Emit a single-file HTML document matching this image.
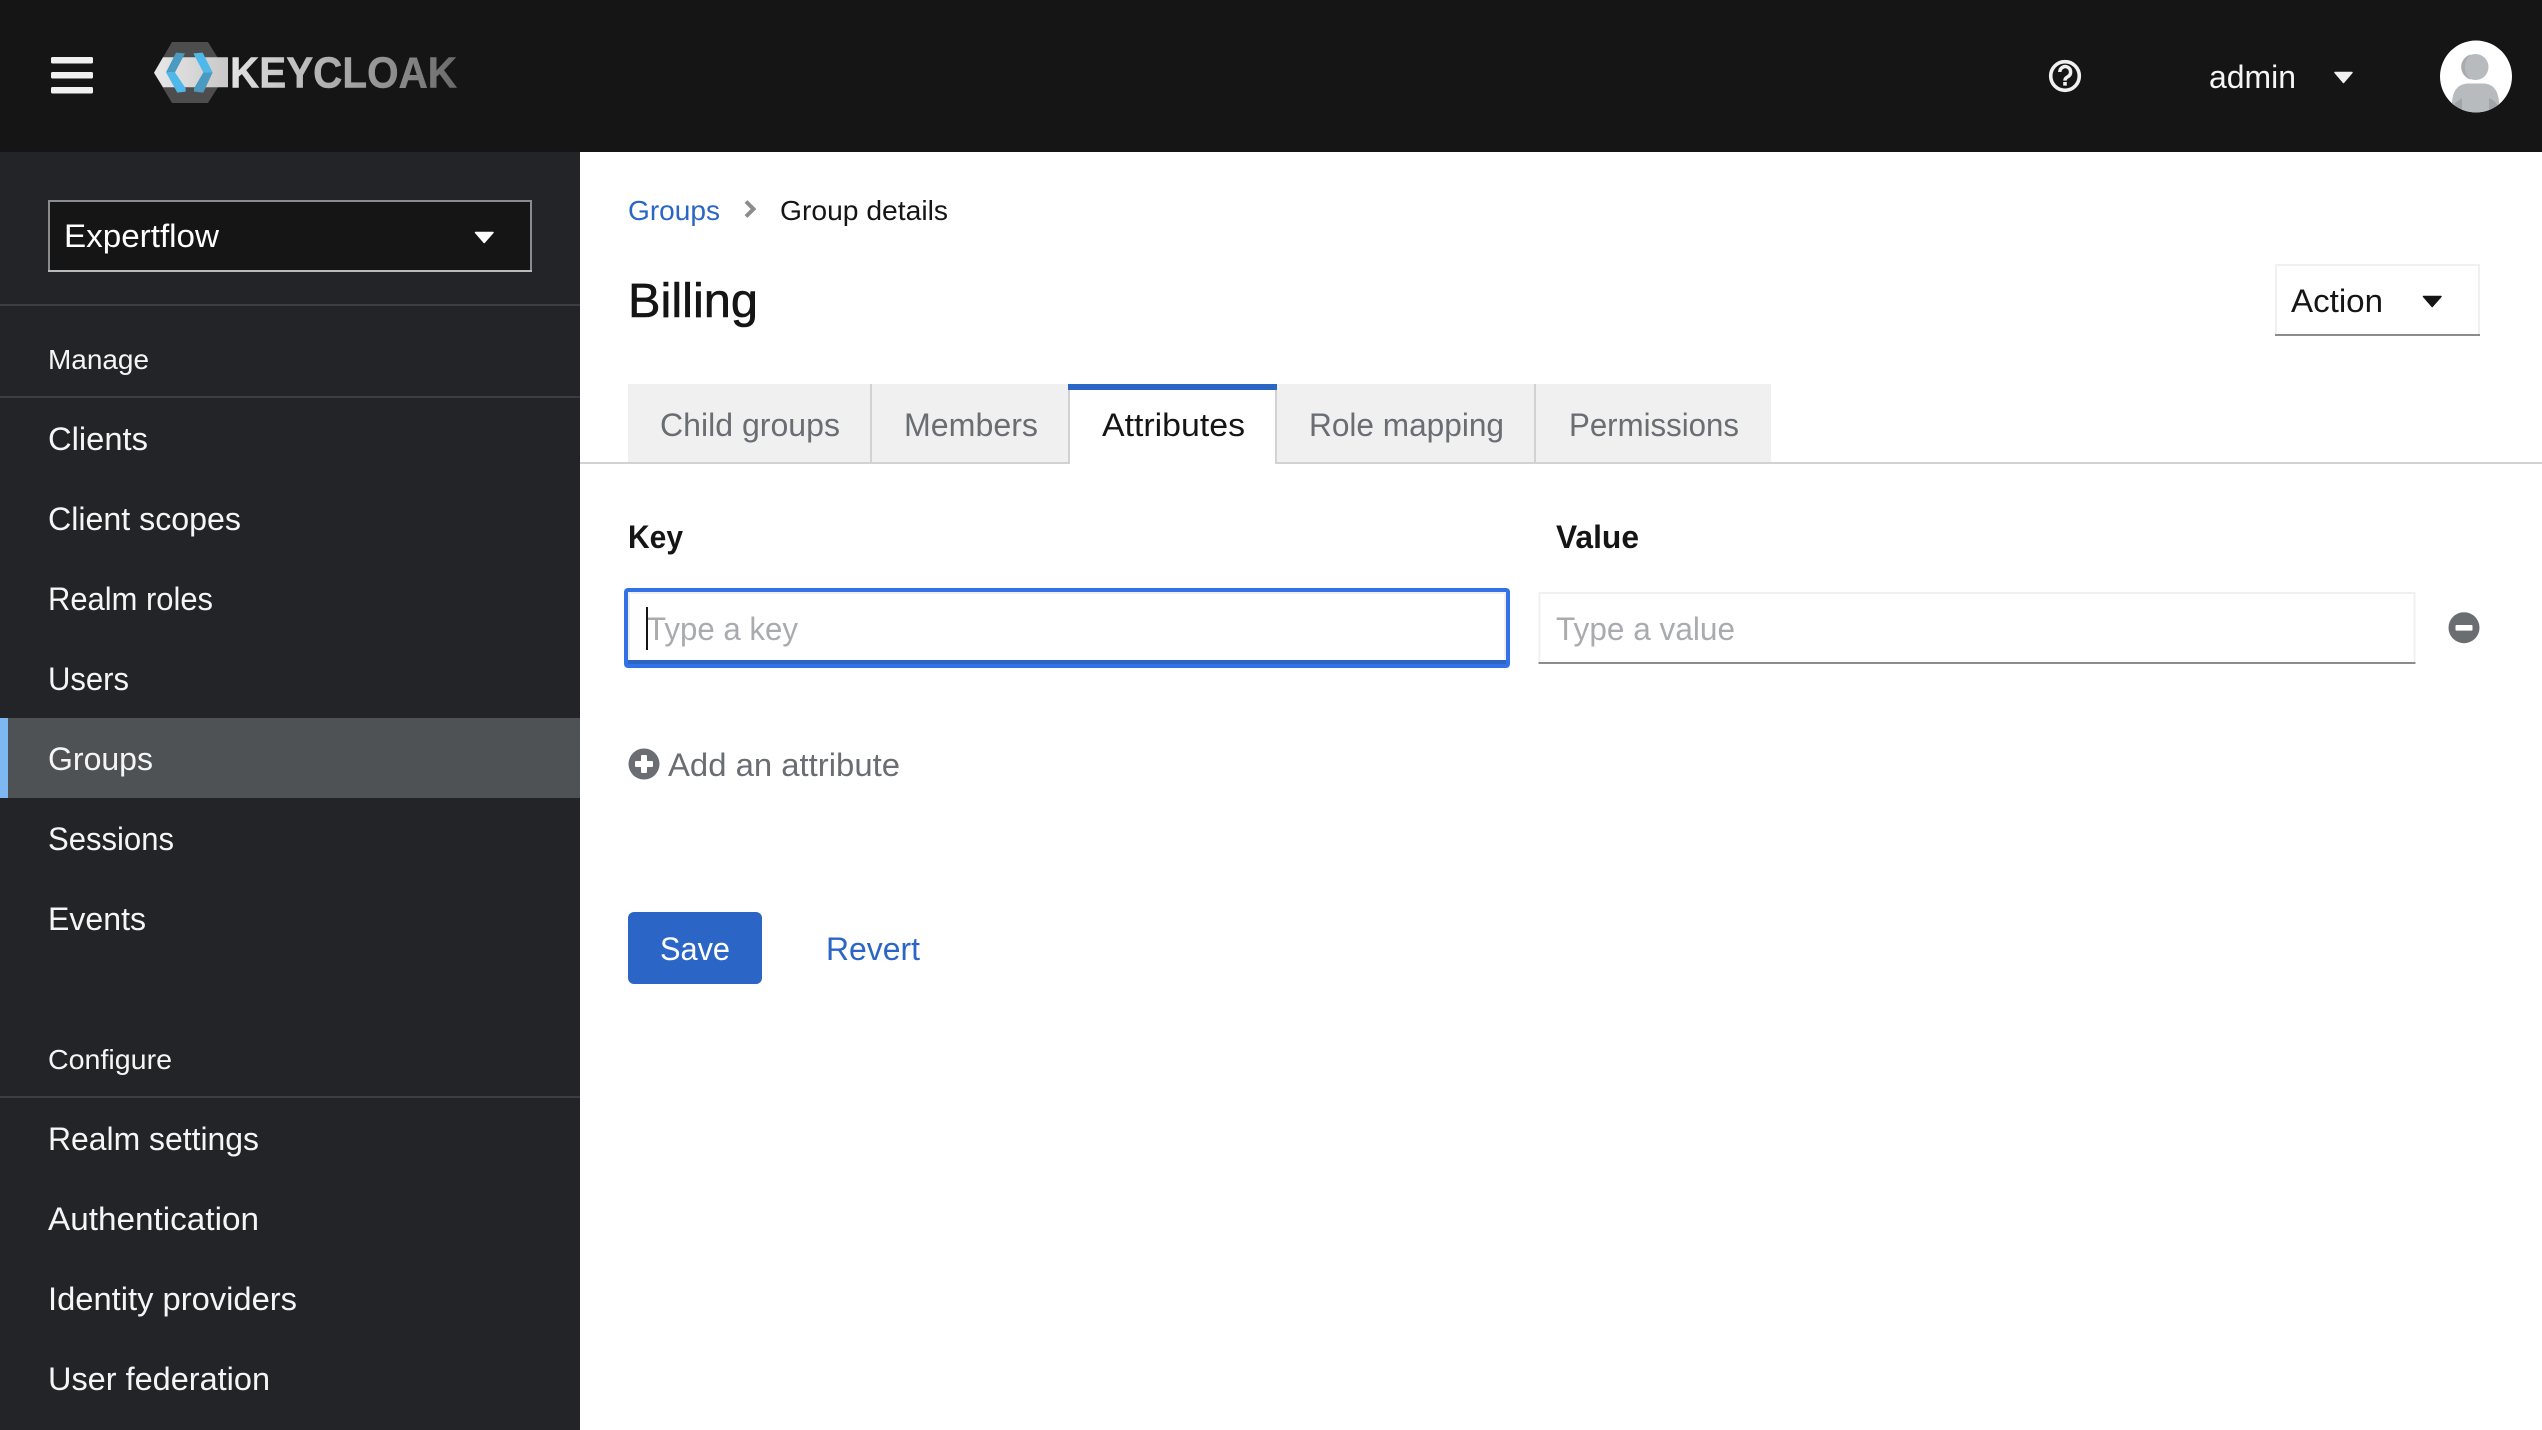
<!DOCTYPE html>
<html lang="en">
<head>
<meta charset="utf-8">
<title>Keycloak - Group details</title>
<style>
html,body{margin:0;padding:0;background:#fff;width:2542px;height:1430px;overflow:hidden}
svg{display:block}
text{font-family:"Liberation Sans",sans-serif;font-size:32px}
.n{fill:#f5f5f5}
.s{font-size:28px}
.g{fill:#6a6e73}
.d{fill:#151515}
.b{fill:#2b66c6}
.p{fill:#a9abae}
</style>
</head>
<body>
<svg width="2542" height="1430" viewBox="0 0 2542 1430" xmlns="http://www.w3.org/2000/svg">
<defs>
<linearGradient id="kc" x1="230" y1="0" x2="457" y2="0" gradientUnits="userSpaceOnUse">
<stop offset="0" stop-color="#e2e2e2"/><stop offset=".5" stop-color="#a8a8a8"/><stop offset="1" stop-color="#6a6a6a"/>
</linearGradient>
<linearGradient id="band" x1="154" y1="0" x2="228" y2="0" gradientUnits="userSpaceOnUse">
<stop offset="0" stop-color="#e8e8e8"/><stop offset="1" stop-color="#c8c8c8"/>
</linearGradient>
<clipPath id="av"><circle cx="2476" cy="76.5" r="36"/></clipPath>
</defs>

<!-- header -->
<rect x="0" y="0" width="2542" height="152" fill="#151515"/>
<rect x="51" y="57" width="42" height="6.5" rx="1.5" fill="#f0f0f0"/>
<rect x="51" y="72" width="42" height="6.5" rx="1.5" fill="#f0f0f0"/>
<rect x="51" y="87" width="42" height="6.5" rx="1.5" fill="#f0f0f0"/>

<!-- logo -->
<polygon points="172,42 208,42 227,72.7 208,103 172,103 154,72.7" fill="#4d4d4d"/>
<polygon points="163,57.3 228,57.3 228,87.3 163,87.3 154,72.7" fill="url(#band)"/>
<g transform="translate(140,30) scale(.33333)">
<polygon points="108,68 135,70 105,127 78,127" fill="#4a9ac2"/>
<polygon points="78,127 105,127 137,175 137,185 112,188" fill="#4fb8ea"/>
<polygon points="160,70 188,68 218,127 190,127" fill="#4fb8ea"/>
<polygon points="190,127 218,127 190,188 162,185 162,175" fill="#4a9ac2"/>
</g>
<text x="230" y="87.3" font-weight="700" style="font-size:43.6px" fill="url(#kc)" stroke="url(#kc)" stroke-width=".5" textLength="227" lengthAdjust="spacingAndGlyphs">KEYCLOAK</text>

<!-- help -->
<circle cx="2065" cy="76" r="14.3" fill="none" stroke="#f0f0f0" stroke-width="3.6"/>
<path d="M2059.8,72 a5.4,5.4 0 1 1 8.2,4.6 c-2,1.3 -3,1.9 -3,4" fill="none" stroke="#f0f0f0" stroke-width="3.5"/>
<rect x="2063.2" y="82" width="3.6" height="3.6" fill="#f0f0f0"/>

<text class="n" x="2209" y="88" textLength="87" lengthAdjust="spacingAndGlyphs">admin</text>
<polygon points="2335,72.5 2352,72.5 2343.5,82.5" fill="#f0f0f0" stroke="#f0f0f0" stroke-width="1.5" stroke-linejoin="round"/>

<!-- avatar -->
<circle cx="2476" cy="76.5" r="36" fill="#fff"/>
<g clip-path="url(#av)">
<ellipse cx="2475.5" cy="67" rx="13" ry="13" fill="#b8bbbe"/>
<path d="M2471,54.4 a13,13 0 0 0 0,25.2 a16,16 0 0 1 0,-25.2z" fill="#a9acaf"/>
<path d="M2452,115 L2452,102 C2453,90 2458,84 2468,83.5 L2484,83.5 C2493,84 2498,90 2499,102 L2499,115z" fill="#b8bbbe"/>
<path d="M2462,98 L2462,115 L2452,115 L2455,103z" fill="#a2a5a8"/>
<path d="M2489,98 C2494,100 2497,103 2498,108 L2489,115z" fill="#a2a5a8"/>
</g>

<!-- sidebar -->
<rect x="0" y="152" width="580" height="1278" fill="#222428"/>
<rect x="49" y="201" width="482" height="70" fill="#151515" stroke="#8a8d90" stroke-width="2"/>
<rect x="48" y="270" width="484" height="2" fill="#b8bbbe"/>
<text x="64" y="247" fill="#fff" textLength="155" lengthAdjust="spacingAndGlyphs">Expertflow</text>
<polygon points="475.5,232.5 493,232.5 484.2,242.5" fill="#fff" stroke="#fff" stroke-width="1.5" stroke-linejoin="round"/>
<rect x="0" y="304" width="580" height="2" fill="#3c3f42"/>
<text class="n s" x="48" y="369" textLength="101" lengthAdjust="spacingAndGlyphs">Manage</text>
<rect x="0" y="396" width="580" height="2" fill="#3c3f42"/>
<text class="n" x="48" y="450" textLength="100" lengthAdjust="spacingAndGlyphs">Clients</text>
<text class="n" x="48" y="530" textLength="193" lengthAdjust="spacingAndGlyphs">Client scopes</text>
<text class="n" x="48" y="610" textLength="165" lengthAdjust="spacingAndGlyphs">Realm roles</text>
<text class="n" x="48" y="690" textLength="81" lengthAdjust="spacingAndGlyphs">Users</text>
<rect x="0" y="718" width="580" height="80" fill="#4f5255"/>
<rect x="0" y="718" width="8" height="80" fill="#7db8f3"/>
<text class="n" x="48" y="770" textLength="105" lengthAdjust="spacingAndGlyphs">Groups</text>
<text class="n" x="48" y="850" textLength="126" lengthAdjust="spacingAndGlyphs">Sessions</text>
<text class="n" x="48" y="930" textLength="98" lengthAdjust="spacingAndGlyphs">Events</text>
<text class="n s" x="48" y="1069" textLength="124" lengthAdjust="spacingAndGlyphs">Configure</text>
<rect x="0" y="1096" width="580" height="2" fill="#3c3f42"/>
<text class="n" x="48" y="1150" textLength="211" lengthAdjust="spacingAndGlyphs">Realm settings</text>
<text class="n" x="48" y="1230" textLength="211" lengthAdjust="spacingAndGlyphs">Authentication</text>
<text class="n" x="48" y="1310" textLength="249" lengthAdjust="spacingAndGlyphs">Identity providers</text>
<text class="n" x="48" y="1390" textLength="222" lengthAdjust="spacingAndGlyphs">User federation</text>

<!-- breadcrumb -->
<text class="b s" x="628" y="220" textLength="92" lengthAdjust="spacingAndGlyphs">Groups</text>
<path d="M746,201.5 L753.5,209 L746,216.5" fill="none" stroke="#8a8d90" stroke-width="4"/>
<text class="d s" x="780" y="220" textLength="168" lengthAdjust="spacingAndGlyphs">Group details</text>

<!-- title -->
<text class="d" x="628" y="317" style="font-size:48px" stroke="#151515" stroke-width=".6" textLength="130" lengthAdjust="spacingAndGlyphs">Billing</text>

<!-- action -->
<rect x="2276" y="265" width="203" height="70" fill="#fff" stroke="#f0f0f0" stroke-width="2"/>
<rect x="2275" y="334" width="205" height="2" fill="#8a8d90"/>
<text class="d" x="2291" y="312" textLength="92" lengthAdjust="spacingAndGlyphs">Action</text>
<polygon points="2423.5,296.5 2441,296.5 2432.2,306.5" fill="#151515" stroke="#151515" stroke-width="1.5" stroke-linejoin="round"/>

<!-- tabs -->
<rect x="628" y="384" width="1143" height="78" fill="#f0f0f0"/>
<rect x="1070" y="384" width="205" height="80" fill="#fff"/>
<rect x="580" y="462" width="490" height="2" fill="#d2d2d2"/>
<rect x="1275" y="462" width="1267" height="2" fill="#d2d2d2"/>
<rect x="870" y="384" width="2" height="78" fill="#d2d2d2"/>
<rect x="1068" y="384" width="2" height="80" fill="#d2d2d2"/>
<rect x="1275" y="384" width="2" height="80" fill="#d2d2d2"/>
<rect x="1534" y="384" width="2" height="78" fill="#d2d2d2"/>
<rect x="1068" y="384" width="209" height="6" fill="#2b66c6"/>
<text class="g" x="660" y="436" textLength="180" lengthAdjust="spacingAndGlyphs">Child groups</text>
<text class="g" x="904" y="436" textLength="134" lengthAdjust="spacingAndGlyphs">Members</text>
<text class="d" x="1102" y="436" textLength="143" lengthAdjust="spacingAndGlyphs">Attributes</text>
<text class="g" x="1309" y="436" textLength="195" lengthAdjust="spacingAndGlyphs">Role mapping</text>
<text class="g" x="1569" y="436" textLength="170" lengthAdjust="spacingAndGlyphs">Permissions</text>

<!-- attributes -->
<text x="628" y="548" font-weight="700" fill="#151515" textLength="55" lengthAdjust="spacingAndGlyphs">Key</text>
<text x="1556" y="548" font-weight="700" fill="#151515" textLength="83" lengthAdjust="spacingAndGlyphs">Value</text>

<rect x="624" y="588" width="886" height="80" rx="4" fill="#3272e6"/>
<rect x="628" y="660" width="878" height="4" fill="#2b66c6"/>
<rect x="628" y="592" width="878" height="68" fill="#f0f0f0"/>
<rect x="630" y="594" width="874" height="66" fill="#fff"/>
<text class="p" x="647" y="640" textLength="151" lengthAdjust="spacingAndGlyphs">Type a key</text>
<rect x="646" y="607" width="2" height="43" fill="#151515"/>

<rect x="1539.5" y="593" width="875" height="70" fill="#fff" stroke="#f0f0f0" stroke-width="2"/>
<rect x="1538.5" y="662" width="877" height="2" fill="#8a8d90"/>
<text class="p" x="1556" y="640" textLength="179" lengthAdjust="spacingAndGlyphs">Type a value</text>

<circle cx="2464" cy="627.7" r="15.5" fill="#6a6e73"/>
<rect x="2455.5" y="625" width="17" height="5.6" rx="1" fill="#fff"/>

<circle cx="644" cy="764" r="15.5" fill="#6a6e73"/>
<rect x="635" y="761" width="18" height="6" rx="1" fill="#fff"/>
<rect x="641" y="755" width="6" height="18" rx="1" fill="#fff"/>
<text class="g" x="668" y="776" textLength="232" lengthAdjust="spacingAndGlyphs">Add an attribute</text>

<!-- buttons -->
<rect x="628" y="912" width="134" height="72" rx="6" fill="#2b66c6"/>
<text x="660" y="960" fill="#fff" textLength="70" lengthAdjust="spacingAndGlyphs">Save</text>
<text class="b" x="826" y="960" textLength="94" lengthAdjust="spacingAndGlyphs">Revert</text>
</svg>
</body>
</html>
